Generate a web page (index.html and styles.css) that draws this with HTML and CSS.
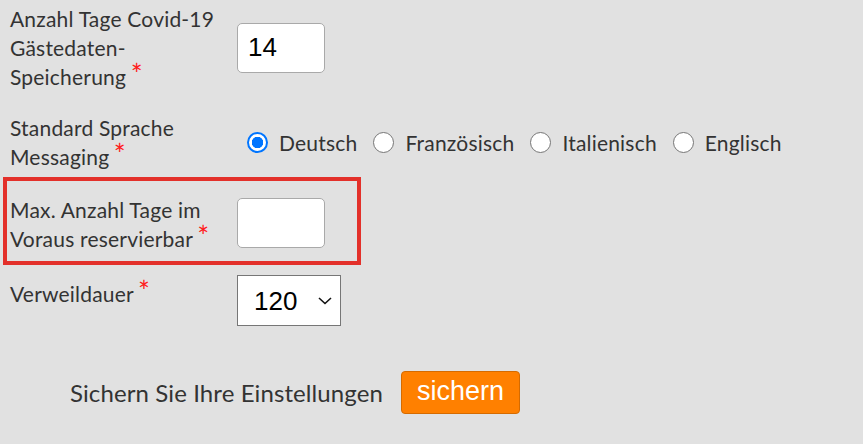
FILE: index.html
```html
<!DOCTYPE html>
<html lang="de">
<head>
<meta charset="utf-8">
<link rel="stylesheet" href="styles.css">
</head>
<body>
<form class="form">
  <div class="row row-first">
    <label class="label">Anzahl Tage Covid-19 Gästedaten-Speicherung <span class="req">*</span></label>
    <div class="field"><input class="text-input" type="text" value="14"></div>
  </div>
  <div class="row row-lang">
    <label class="label">Standard Sprache Messaging <span class="req">*</span></label>
    <div class="field radios">
      <label class="radio"><input type="radio" name="lang" checked><span>Deutsch</span></label>
      <label class="radio"><input type="radio" name="lang"><span>Französisch</span></label>
      <label class="radio"><input type="radio" name="lang"><span>Italienisch</span></label>
      <label class="radio"><input type="radio" name="lang"><span>Englisch</span></label>
    </div>
  </div>
  <div class="row row-highlight">
    <label class="label">Max. Anzahl Tage im Voraus reservierbar <span class="req">*</span></label>
    <div class="field"><input class="text-input" type="text" value=""></div>
  </div>
  <div class="row row-select">
    <label class="label label-top">Verweildauer <span class="req">*</span></label>
    <div class="field">
      <div class="select-wrap">
        <select class="select"><option>120</option></select>
        <svg class="chevron" width="14" height="8" viewBox="0 0 14 8"><path d="M1 1 L7 6.5 L13 1" fill="none" stroke="#111" stroke-width="1.6"/></svg>
      </div>
    </div>
  </div>
  <div class="save-row">
    <span class="save-text">Sichern Sie Ihre Einstellungen</span>
    <button type="button" class="save-btn">sichern</button>
  </div>
</form>
</body>
</html>
```
FILE: styles.css
```css
html, body {
  margin: 0;
  padding: 0;
  background: #e1e1e1;
}
body {
  font-family: Lato, "Open Sans", sans-serif;
  color: #333;
  font-size: 21px;
  letter-spacing: 0.2px;
  line-height: 29px;
}
.form {
  display: flex;
  flex-direction: column;
}
.row {
  display: flex;
  align-items: center;
  padding-left: 10px;
}
.label {
  width: 227px;
  flex: none;
  padding-right: 8px;
  box-sizing: border-box;
}
.req {
  color: #ff1a1a;
  font-size: 28px;
  line-height: 0;
  vertical-align: baseline;
  margin-left: -1px;
}
.row-first {
  padding-top: 4px;
}
.row-lang {
  margin-top: 22px;
}
.row-highlight {
  margin-top: 6px;
  width: 358px;
  box-sizing: border-box;
  margin-left: 3px;
  border: 4px solid #e3302a;
  padding: 14px 0 8px 3px;
}
.row-highlight .text-input {
  margin-top: -2px;
}
.row-select {
  margin-top: 10px;
  align-items: flex-start;
}
.label-top {
  padding-top: 4px;
}
.text-input {
  width: 88px;
  height: 50px;
  box-sizing: border-box;
  border: 1px solid #a9a9a9;
  border-radius: 5px;
  background: #fff;
  font-family: "Liberation Sans", Arial, sans-serif;
  font-size: 26px;
  letter-spacing: 0;
  padding: 0 10px;
  color: #000;
  margin: 0;
  outline: none;
}
.radios {
  display: flex;
  align-items: center;
  margin-left: 10px;
}
.radio {
  display: flex;
  align-items: center;
  margin-right: 16px;
}
.radio input {
  appearance: none;
  -webkit-appearance: none;
  width: 21px;
  height: 21px;
  margin: 0 11px 0 0;
  border: 1px solid #767676;
  border-radius: 50%;
  background: #fff;
  box-sizing: border-box;
}
.radio input:checked {
  border: 2px solid #0075ff;
  background: radial-gradient(circle, #0075ff 0 5.5px, #fff 6px);
}
.select-wrap {
  position: relative;
  width: 104px;
  height: 51px;
}
.select {
  appearance: none;
  -webkit-appearance: none;
  width: 104px;
  height: 51px;
  box-sizing: border-box;
  border: 1px solid #767676;
  border-radius: 0;
  background: #fff;
  font-family: "Liberation Sans", Arial, sans-serif;
  font-size: 26px;
  letter-spacing: 0;
  color: #000;
  padding: 0 0 0 16px;
  margin: 0;
}
.chevron {
  position: absolute;
  right: 9px;
  top: 22px;
  pointer-events: none;
}
.save-row {
  display: flex;
  align-items: center;
  padding-left: 70px;
  margin-top: 45px;
}
.save-text {
  font-size: 24px;
  letter-spacing: 0.1px;
  margin-right: 18px;
}
.save-btn {
  width: 119px;
  height: 43px;
  background: #ff8000;
  border: 1px solid #d56b00;
  border-radius: 4px;
  color: #fff;
  font-family: "Liberation Sans", Arial, sans-serif;
  font-size: 27px;
  letter-spacing: 0;
  padding: 0 0 3px;
}
```
